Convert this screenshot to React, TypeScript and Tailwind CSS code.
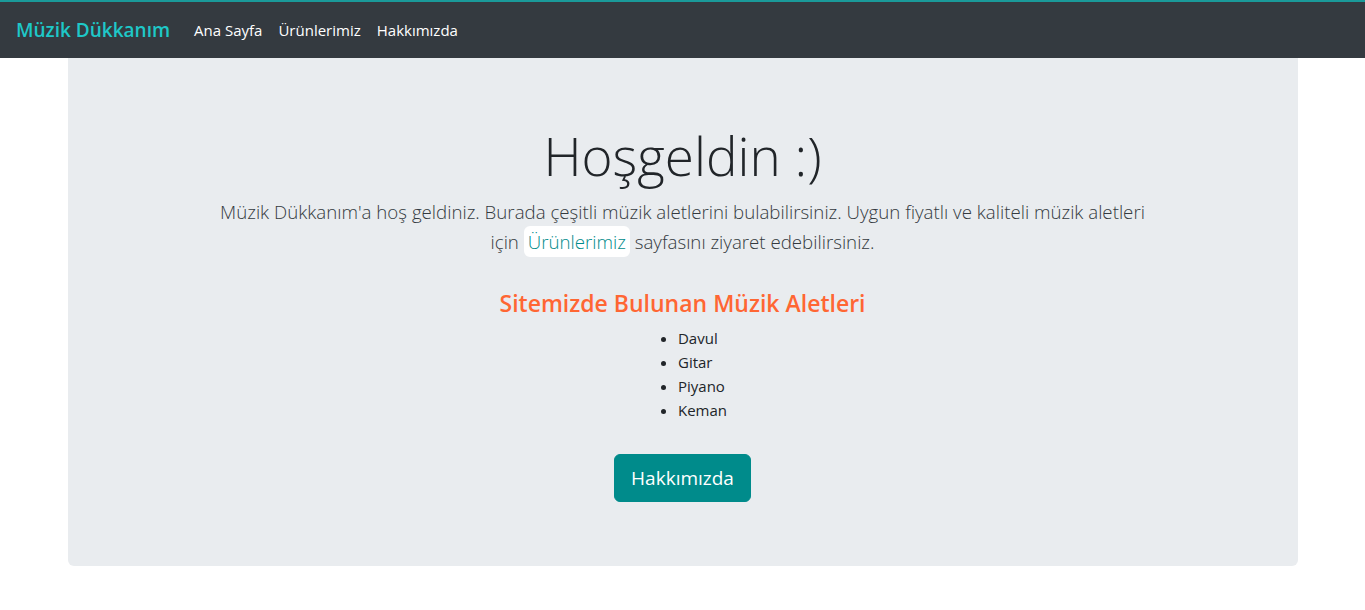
import React from "react";

const font = { fontFamily: '"Open Sans", "Noto Sans", sans-serif' };

const navLinks = ["Ana Sayfa", "Ürünlerimiz", "Hakkımızda"];
const instruments = ["Davul", "Gitar", "Piyano", "Keman"];

const Navbar = () => {
  return (
    <nav className="flex items-center h-[58px] px-4 bg-[#343a40] border-t-2 border-[#1a9a9a]">
      <a className="text-[19px] leading-[30px] font-semibold text-[#1ec8c8] mr-4">
        Müzik Dükkanım
      </a>
      <div className="flex items-center">
        {navLinks.map((l) => (
          <a key={l} className="px-2 text-[15px] leading-6 text-white">
            {l}
          </a>
        ))}
      </div>
    </nav>
  );
};

export default function App() {
  return (
    <div className="min-h-screen bg-white text-[#212529]" style={font}>
      <Navbar />
      <div className="w-[1230px] mx-auto bg-[#e9ecef] rounded-b-md pt-16 pb-16 text-center">
        <h1 className="text-[53px] leading-[67px] font-light mb-2">Hoşgeldin :)</h1>
        <p className="text-[18.7px] leading-[30px] font-light text-[#343a40]">
          Müzik Dükkanım'a hoş geldiniz. Burada çeşitli müzik aletlerini bulabilirsiniz. Uygun fiyatlı ve kaliteli müzik aletleri
          <br />
          için{" "}
          <a className="bg-white text-[#008b8b] rounded-md px-1 py-[3px]">Ürünlerimiz</a>{" "}
          sayfasını ziyaret edebilirsiniz.
        </p>
        <h3 className="mt-8 mb-2 text-[23px] leading-[29px] font-semibold text-[#ff6633]">
          Sitemizde Bulunan Müzik Aletleri
        </h3>
        <ul className="inline-block text-left list-disc pl-10 mb-4 text-[15px] leading-6">
          {instruments.map((i) => (
            <li key={i}>{i}</li>
          ))}
        </ul>
        <div className="mt-4">
          <button className="bg-[#008b8b] border border-[#008b8b] text-white text-[19px] leading-[30px] px-4 py-2 rounded-md">
            Hakkımızda
          </button>
        </div>
      </div>
    </div>
  );
}
